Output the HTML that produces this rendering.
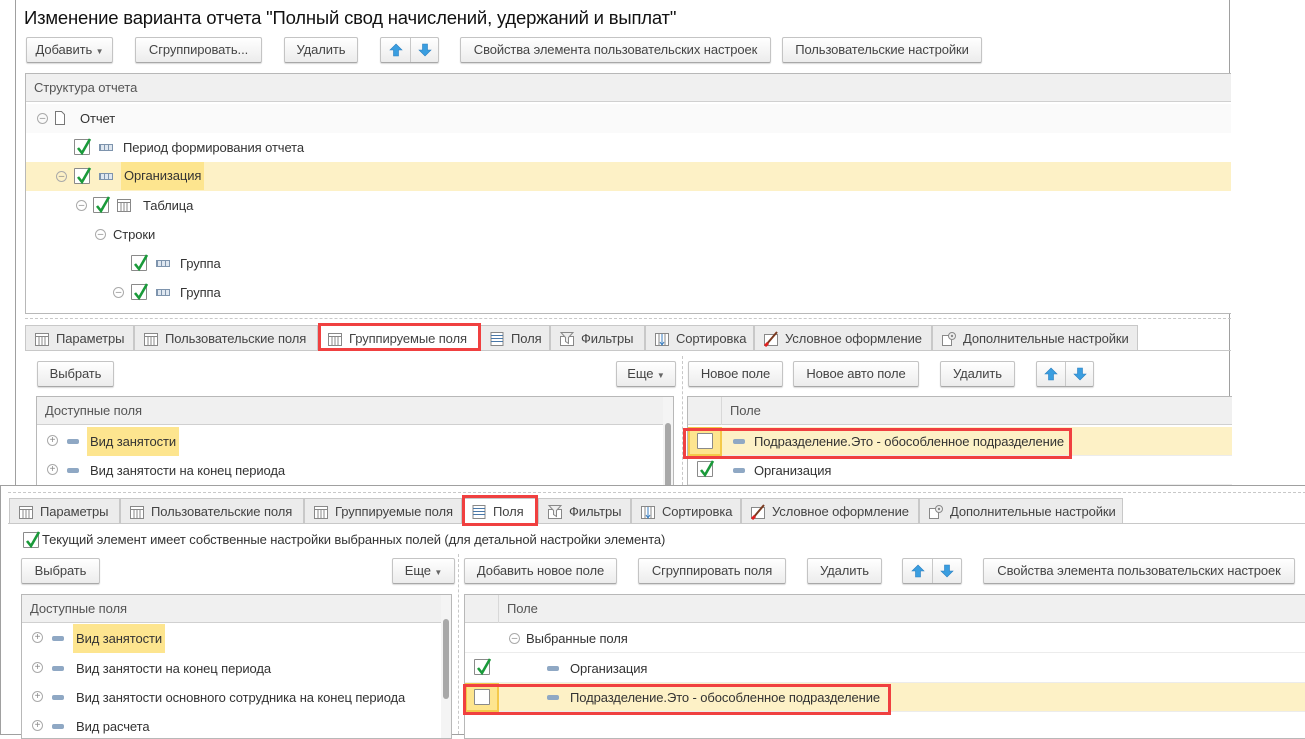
<!DOCTYPE html>
<html><head><meta charset="utf-8"><style>
*{box-sizing:border-box;margin:0;padding:0}
body{width:1305px;height:733px;overflow:hidden;background:#fff;font-family:"Liberation Sans",Arial,sans-serif;font-size:13px;letter-spacing:-0.1px;color:#333;position:relative}
.a{position:absolute}
.win{position:absolute;background:#fff;border:1px solid #a0a0a0}
.btn{position:absolute;height:26px;border:1px solid #c4c4c4;border-bottom-color:#a8a8a8;border-radius:2px;background:linear-gradient(#fff,#ececec);box-shadow:0 1px 1px rgba(0,0,0,.15);text-align:center;line-height:24px;color:#444;white-space:nowrap}
.tab{position:absolute;height:26px;border:1px solid #c8c8c8;border-bottom:none;background:#ececec;line-height:25px;color:#444;white-space:nowrap;padding-left:30px}
.tab.on{background:#fff}
.tab svg{position:absolute;left:8px;top:5px}
.tbl{position:absolute;border:1px solid #b8b8b8;background:#fff;overflow:hidden}
.hdr{position:absolute;left:0;right:0;top:0;height:28px;background:#f0f0f0;border-bottom:1px solid #d0d0d0;line-height:28px;padding-left:8px;color:#555}
.row{position:absolute;left:0;right:0;height:29px;border-bottom:1px solid #ececec}
.tree .row{border:none}
.t{position:absolute;white-space:nowrap;line-height:18px}
.cb{position:absolute;width:16px;height:16px;border:1px solid #8a8a8a;background:#fff;border-radius:1px}
.cb svg{position:absolute;left:0;top:-4px}
.fi{position:absolute;width:12px;height:5px;background:#8fa8c4;border-radius:2px}
.gi{position:absolute;width:14px;height:7px;border:1px solid #7e94ad;background:repeating-linear-gradient(90deg,#7e94ad 0 1px,#dfe7f0 1px 4px)}
.mn{position:absolute;width:11px;height:11px;border:1px solid #aaa;border-radius:50%;font-size:10px;line-height:9px;text-align:center;color:#888}
.red{position:absolute;border:3px solid #f04040}
.dash{position:absolute;border-top:1px dashed #c8c8c8}
.hl{background:#fdf1c6}
.hlt{background:#fde58f;padding:0 2px;margin-left:-2px}
.arr{position:absolute;height:26px;border:1px solid #c4c4c4;border-bottom-color:#a8a8a8;border-radius:2px;background:linear-gradient(#fff,#ececec);box-shadow:0 1px 1px rgba(0,0,0,.15)}
.arr:after{content:"";position:absolute;left:50%;top:0;bottom:0;border-left:1px solid #c8c8c8}
.sb{position:absolute;width:10px;background:#f4f4f4}
.sb i{position:absolute;left:2px;width:6px;background:#a8a8a8;border-radius:3px}
</style></head><body>

<svg width="0" height="0" style="position:absolute"><defs>
<symbol id="chk" viewBox="0 0 18 22"><path d="M3 12 L7 17 L15 3" fill="none" stroke="#1a9a3a" stroke-width="2.6"/></symbol>
<symbol id="up" viewBox="0 0 14 14"><path d="M7 1 L13 7 L9.5 7 L9.5 13 L4.5 13 L4.5 7 L1 7 Z" fill="#3a9ee0" stroke="#2a7fc0" stroke-width=".6"/></symbol>
<symbol id="dn" viewBox="0 0 14 14"><path d="M7 13 L13 7 L9.5 7 L9.5 1 L4.5 1 L4.5 7 L1 7 Z" fill="#3a9ee0" stroke="#2a7fc0" stroke-width=".6"/></symbol>
<symbol id="ti" viewBox="0 0 16 16"><rect x="1.5" y="2.5" width="13" height="12" fill="#fff" stroke="#888"/><path d="M1.5 5.5h13M5 5.5v9M8 5.5v9M11 5.5v9" stroke="#888"/></symbol>
<symbol id="pi" viewBox="0 0 16 16"><rect x="2" y="1.5" width="12" height="13" fill="#fff" stroke="#888"/><path d="M2 4.5h12M2 7.5h12M2 10.5h12" stroke="#4a78a8"/></symbol>
<symbol id="fl" viewBox="0 0 16 16"><rect x="1.5" y="5.5" width="13" height="9" fill="#fff" stroke="#888"/><path d="M2 1.5h12l-4.5 5v6l-3-2v-4z" fill="#eee" stroke="#888"/></symbol>
<symbol id="uo" viewBox="0 0 16 16"><rect x="1.5" y="3.5" width="13" height="11" fill="#fff" stroke="#888"/><path d="M3 14L14 1" stroke="#7a3a20" stroke-width="2"/><path d="M2 15l3-3" stroke="#e02020" stroke-width="3"/></symbol>
<symbol id="dop" viewBox="0 0 16 16"><rect x="1.5" y="4.5" width="9" height="10" fill="#fff" stroke="#888"/><circle cx="11" cy="5" r="3.5" fill="#eee" stroke="#888"/><circle cx="11" cy="5" r="1.2" fill="#888"/></symbol>
<symbol id="so" viewBox="0 0 16 16"><rect x="1.5" y="2.5" width="13" height="12" fill="#fff" stroke="#888"/><path d="M5 2.5v12M11 2.5v12" stroke="#888"/><path d="M8 3v10M6 11l2 3 2-3" stroke="#3a7ec0" fill="none"/></symbol>
</defs></svg>

<!-- TOP WINDOW -->
<div class="win" style="left:15px;top:-1px;width:1215px;height:490px">
  <div class="t" style="left:8px;top:7px;font-size:18.5px;letter-spacing:-0.2px;color:#111;line-height:22px">Изменение варианта отчета "Полный свод начислений, удержаний и выплат"</div>
  <div class="btn" style="left:10px;top:37px;width:87px">Добавить <span style="font-size:8px;color:#666">▼</span></div>
  <div class="btn" style="left:119px;top:37px;width:127px">Сгруппировать...</div>
  <div class="btn" style="left:268px;top:37px;width:74px">Удалить</div>
  <div class="arr" style="left:364px;top:37px;width:59px"><svg class="a" style="left:8px;top:5px" width="14" height="14"><use href="#up"/></svg><svg class="a" style="left:37px;top:5px" width="14" height="14"><use href="#dn"/></svg></div>
  <div class="btn" style="left:444px;top:37px;width:311px">Свойства элемента пользовательских настроек</div>
  <div class="btn" style="left:766px;top:37px;width:200px">Пользовательские настройки</div>

  <div class="tbl tree" style="left:9px;top:73px;width:1206px;height:241px;border-right:none">
    <div class="hdr">Структура отчета</div>
    <div class="row" style="top:30px;background:#fafafa"><div class="mn" style="left:11px;top:9px">–</div><svg class="a" style="left:27px;top:6px" width="14" height="16"><path d="M2.5 1.5h6l3 3v10h-9z" fill="#fff" stroke="#777"/></svg><div class="t" style="left:54px;top:6px">Отчет</div></div>
    <div class="row" style="top:59px"><div class="cb" style="left:48px;top:6px"><svg width="18" height="22"><use href="#chk"/></svg></div><div class="gi" style="left:73px;top:11px"></div><div class="t" style="left:97px;top:6px">Период формирования отчета</div></div>
    <div class="row hl" style="top:88px"><div class="mn" style="left:30px;top:9px">–</div><div class="cb" style="left:48px;top:6px"><svg width="18" height="22"><use href="#chk"/></svg></div><div class="gi" style="left:73px;top:11px"></div><div class="t hlt" style="left:97px;top:0;line-height:28px;padding:0 3px">Организация</div></div>
    <div class="row" style="top:117px"><div class="mn" style="left:50px;top:9px">–</div><div class="cb" style="left:67px;top:6px"><svg width="18" height="22"><use href="#chk"/></svg></div><svg class="a" style="left:90px;top:6px" width="16" height="16"><use href="#ti"/></svg><div class="t" style="left:117px;top:6px">Таблица</div></div>
    <div class="row" style="top:146px"><div class="mn" style="left:69px;top:9px">–</div><div class="t" style="left:87px;top:6px">Строки</div></div>
    <div class="row" style="top:175px"><div class="cb" style="left:105px;top:6px"><svg width="18" height="22"><use href="#chk"/></svg></div><div class="gi" style="left:130px;top:11px"></div><div class="t" style="left:154px;top:6px">Группа</div></div>
    <div class="row" style="top:204px"><div class="mn" style="left:87px;top:9px">–</div><div class="cb" style="left:105px;top:6px"><svg width="18" height="22"><use href="#chk"/></svg></div><div class="gi" style="left:130px;top:11px"></div><div class="t" style="left:154px;top:6px">Группа</div></div>
  </div>
  <div class="dash" style="left:9px;top:318px;width:1206px"></div>

  <div class="tab" style="left:9px;top:325px;width:109px"><svg width="16" height="16"><use href="#ti"/></svg>Параметры</div>
  <div class="tab" style="left:118px;top:325px;width:184px"><svg width="16" height="16"><use href="#ti"/></svg>Пользовательские поля</div>
  <div class="tab on" style="left:302px;top:325px;width:162px"><svg width="16" height="16"><use href="#ti"/></svg>Группируемые поля</div>
  <div class="tab" style="left:464px;top:325px;width:70px"><svg width="16" height="16"><use href="#pi"/></svg>Поля</div>
  <div class="tab" style="left:534px;top:325px;width:95px"><svg width="16" height="16"><use href="#fl"/></svg>Фильтры</div>
  <div class="tab" style="left:629px;top:325px;width:109px"><svg width="16" height="16"><use href="#so"/></svg>Сортировка</div>
  <div class="tab" style="left:738px;top:325px;width:178px"><svg width="16" height="16"><use href="#uo"/></svg>Условное оформление</div>
  <div class="tab" style="left:916px;top:325px;width:206px"><svg width="16" height="16"><use href="#dop"/></svg>Дополнительные настройки</div>
  <div class="a" style="left:9px;top:350px;width:1206px;border-top:1px solid #c8c8c8"></div>
  <div class="red" style="left:302px;top:323px;width:163px;height:28px"></div>

  <div class="btn" style="left:21px;top:361px;width:77px">Выбрать</div>
  <div class="btn" style="left:600px;top:361px;width:60px">Еще <span style="font-size:8px;color:#666">▼</span></div>
  <div class="a" style="left:666px;top:356px;height:134px;border-left:1px dashed #c8c8c8"></div>
  <div class="btn" style="left:672px;top:361px;width:95px">Новое поле</div>
  <div class="btn" style="left:777px;top:361px;width:126px">Новое авто поле</div>
  <div class="btn" style="left:924px;top:361px;width:75px">Удалить</div>
  <div class="arr" style="left:1020px;top:361px;width:58px"><svg class="a" style="left:7px;top:5px" width="14" height="14"><use href="#up"/></svg><svg class="a" style="left:36px;top:5px" width="14" height="14"><use href="#dn"/></svg></div>

  <div class="tbl" style="left:20px;top:396px;width:638px;height:100px">
    <div class="hdr" style="right:10px">Доступные поля</div>
    <div class="sb" style="right:0;top:0;bottom:0"><i style="top:26px;height:80px"></i></div>
    <div class="row" style="top:30px;right:10px;border:none"><div class="mn" style="left:10px;top:8px">+</div><div class="fi" style="left:30px;top:12px"></div><div class="t hlt" style="left:52px;top:0;line-height:29px;padding:0 3px">Вид занятости</div></div>
    <div class="row" style="top:59px;right:10px;border:none"><div class="mn" style="left:10px;top:8px">+</div><div class="fi" style="left:30px;top:12px"></div><div class="t" style="left:53px;top:6px">Вид занятости на конец периода</div></div>
  </div>
  <div class="tbl" style="left:671px;top:396px;width:545px;height:100px;border-right:none">
    <div class="hdr" style="padding-left:42px">Поле</div>
    <div class="a" style="left:33px;top:0;height:28px;border-left:1px solid #d8d8d8"></div>
    <div class="row hl" style="top:30px"><div class="a" style="left:0;top:0;width:34px;height:29px;background:#fde58f;border:2px solid #f4c94a"></div><div class="cb" style="left:9px;top:6px"></div><div class="fi" style="left:45px;top:12px"></div><div class="t" style="left:66px;top:6px">Подразделение.Это - обособленное подразделение</div></div>
    <div class="row" style="top:59px"><div class="cb" style="left:9px;top:5px"><svg width="18" height="22"><use href="#chk"/></svg></div><div class="fi" style="left:45px;top:12px"></div><div class="t" style="left:66px;top:6px">Организация</div></div>
  </div>
  <div class="red" style="left:667px;top:428px;width:389px;height:31px"></div>
</div>

<!-- BOTTOM WINDOW -->
<div class="win" style="left:0;top:485px;width:1306px;height:250px">
  <div class="dash" style="left:7px;top:6px;width:1298px"></div>
  <div class="tab" style="left:8px;top:12px;width:111px"><svg width="16" height="16"><use href="#ti"/></svg>Параметры</div>
  <div class="tab" style="left:119px;top:12px;width:184px"><svg width="16" height="16"><use href="#ti"/></svg>Пользовательские поля</div>
  <div class="tab" style="left:303px;top:12px;width:158px"><svg width="16" height="16"><use href="#ti"/></svg>Группируемые поля</div>
  <div class="tab on" style="left:461px;top:12px;width:76px"><svg width="16" height="16"><use href="#pi"/></svg>Поля</div>
  <div class="tab" style="left:537px;top:12px;width:93px"><svg width="16" height="16"><use href="#fl"/></svg>Фильтры</div>
  <div class="tab" style="left:630px;top:12px;width:110px"><svg width="16" height="16"><use href="#so"/></svg>Сортировка</div>
  <div class="tab" style="left:740px;top:12px;width:178px"><svg width="16" height="16"><use href="#uo"/></svg>Условное оформление</div>
  <div class="tab" style="left:918px;top:12px;width:204px"><svg width="16" height="16"><use href="#dop"/></svg>Дополнительные настройки</div>
  <div class="a" style="left:7px;top:37px;width:1298px;border-top:1px solid #c8c8c8"></div>
  <div class="red" style="left:461px;top:9px;width:76px;height:31px"></div>

  <div class="cb" style="left:22px;top:46px"><svg width="18" height="22"><use href="#chk"/></svg></div>
  <div class="t" style="left:41px;top:45px">Текущий элемент имеет собственные настройки выбранных полей (для детальной настройки элемента)</div>

  <div class="btn" style="left:20px;top:72px;width:79px">Выбрать</div>
  <div class="btn" style="left:391px;top:72px;width:63px">Еще <span style="font-size:8px;color:#666">▼</span></div>
  <div class="a" style="left:457px;top:68px;height:180px;border-left:1px dashed #c8c8c8"></div>
  <div class="btn" style="left:463px;top:72px;width:153px">Добавить новое поле</div>
  <div class="btn" style="left:637px;top:72px;width:148px">Сгруппировать поля</div>
  <div class="btn" style="left:806px;top:72px;width:75px">Удалить</div>
  <div class="arr" style="left:901px;top:72px;width:60px"><svg class="a" style="left:8px;top:5px" width="14" height="14"><use href="#up"/></svg><svg class="a" style="left:37px;top:5px" width="14" height="14"><use href="#dn"/></svg></div>
  <div class="btn" style="left:982px;top:72px;width:312px">Свойства элемента пользовательских настроек</div>

  <div class="tbl" style="left:20px;top:108px;width:431px;height:145px">
    <div class="hdr" style="right:10px">Доступные поля</div>
    <div class="sb" style="right:0;top:0;bottom:0"><i style="top:24px;height:80px"></i></div>
    <div class="row" style="top:29px;right:10px;border:none"><div class="mn" style="left:10px;top:8px">+</div><div class="fi" style="left:30px;top:12px"></div><div class="t hlt" style="left:53px;top:0;line-height:29px;padding:0 3px">Вид занятости</div></div>
    <div class="row" style="top:59px;right:10px;border:none"><div class="mn" style="left:10px;top:8px">+</div><div class="fi" style="left:30px;top:12px"></div><div class="t" style="left:54px;top:6px">Вид занятости на конец периода</div></div>
    <div class="row" style="top:88px;right:10px;border:none"><div class="mn" style="left:10px;top:8px">+</div><div class="fi" style="left:30px;top:12px"></div><div class="t" style="left:54px;top:6px">Вид занятости основного сотрудника на конец периода</div></div>
    <div class="row" style="top:117px;right:10px;border:none"><div class="mn" style="left:10px;top:8px">+</div><div class="fi" style="left:30px;top:12px"></div><div class="t" style="left:54px;top:6px">Вид расчета</div></div>
  </div>
  <div class="tbl" style="left:463px;top:108px;width:843px;height:145px;border-right:none">
    <div class="hdr" style="padding-left:42px">Поле</div>
    <div class="a" style="left:33px;top:0;height:28px;border-left:1px solid #d8d8d8"></div>
    <div class="row" style="top:29px"><div class="mn" style="left:44px;top:9px">–</div><div class="t" style="left:61px;top:6px">Выбранные поля</div></div>
    <div class="row" style="top:59px"><div class="cb" style="left:9px;top:5px"><svg width="18" height="22"><use href="#chk"/></svg></div><div class="fi" style="left:82px;top:12px"></div><div class="t" style="left:105px;top:6px">Организация</div></div>
    <div class="row hl" style="top:88px"><div class="a" style="left:0;top:0;width:34px;height:29px;background:#fde58f;border:2px solid #f4c94a"></div><div class="cb" style="left:9px;top:6px"></div><div class="fi" style="left:82px;top:12px"></div><div class="t" style="left:105px;top:6px">Подразделение.Это - обособленное подразделение</div></div>
  </div>
  <div class="red" style="left:462px;top:198px;width:428px;height:31px"></div>
</div>
</body></html>
